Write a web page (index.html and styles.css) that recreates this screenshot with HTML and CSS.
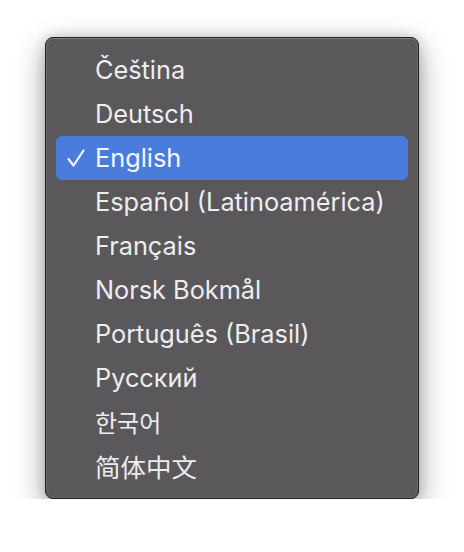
FILE: index.html
```html
<!DOCTYPE html>
<html>
<head>
    <title>Language</title>
    <meta name="viewport" content="width=device-width, initial-scale=1.0">
    <link rel="stylesheet" href="styles.css">
</head>
<body>
    <div class="menu">
        <ul class="menu-list">
            <li class="menu-item">Čeština</li>
            <li class="menu-item">Deutsch</li>
            <li class="menu-item selected">
                <svg class="check" width="20" height="20" viewBox="0 0 20 20">
                    <path d="M2.5 11 L7.5 17.5 L17.5 2.5" fill="none" stroke="currentColor" stroke-width="2.2" stroke-linecap="round" stroke-linejoin="round"/>
                </svg>
                English
            </li>
            <li class="menu-item">Español (Latinoamérica)</li>
            <li class="menu-item">Français</li>
            <li class="menu-item">Norsk Bokmål</li>
            <li class="menu-item">Português (Brasil)</li>
            <li class="menu-item">Русский</li>
            <li class="menu-item ko">한국어</li>
            <li class="menu-item zh">简体中文</li>
        </ul>
    </div>
</body>
</html>
```

FILE: styles.css
```css
body {
    margin: 0;
    padding: 0;
    background-color: #ffffff;
    font-family: Inter, "Noto Sans", sans-serif;
}
.menu {
    margin: 37px 0 0 45px;
    width: 372px;
    height: 460px;
    background-color: #5a585b;
    border: 1px solid #1f1f20;
    border-radius: 8px;
    box-shadow: inset 0 1px 0 rgba(255,255,255,0.16),
                inset 0 0 0 1px rgba(255,255,255,0.10),
                0 10px 30px rgba(0,0,0,0.38),
                0 0 12px rgba(0,0,0,0.16);
}
.menu-list {
    list-style-type: none;
    margin: 0;
    padding: 10px 10px 0 10px;
}
.menu-item {
    position: relative;
    height: 44px;
    line-height: 44px;
    padding-left: 39px;
    font-size: 25.3px;
    color: #ededef;
    border-radius: 6px;
    white-space: nowrap;
}
.menu-item.ko {
    font-family: "Noto Sans CJK KR", sans-serif;
    font-size: 24px;
}
.menu-item.zh {
    font-family: "Noto Sans CJK SC", sans-serif;
    font-size: 25.5px;
}
.menu-item.selected {
    background-color: #4a7cdc;
    color: #f4f6fc;
}
.check {
    position: absolute;
    left: 10px;
    top: 12px;
    color: #f4f6fc;
}
```
